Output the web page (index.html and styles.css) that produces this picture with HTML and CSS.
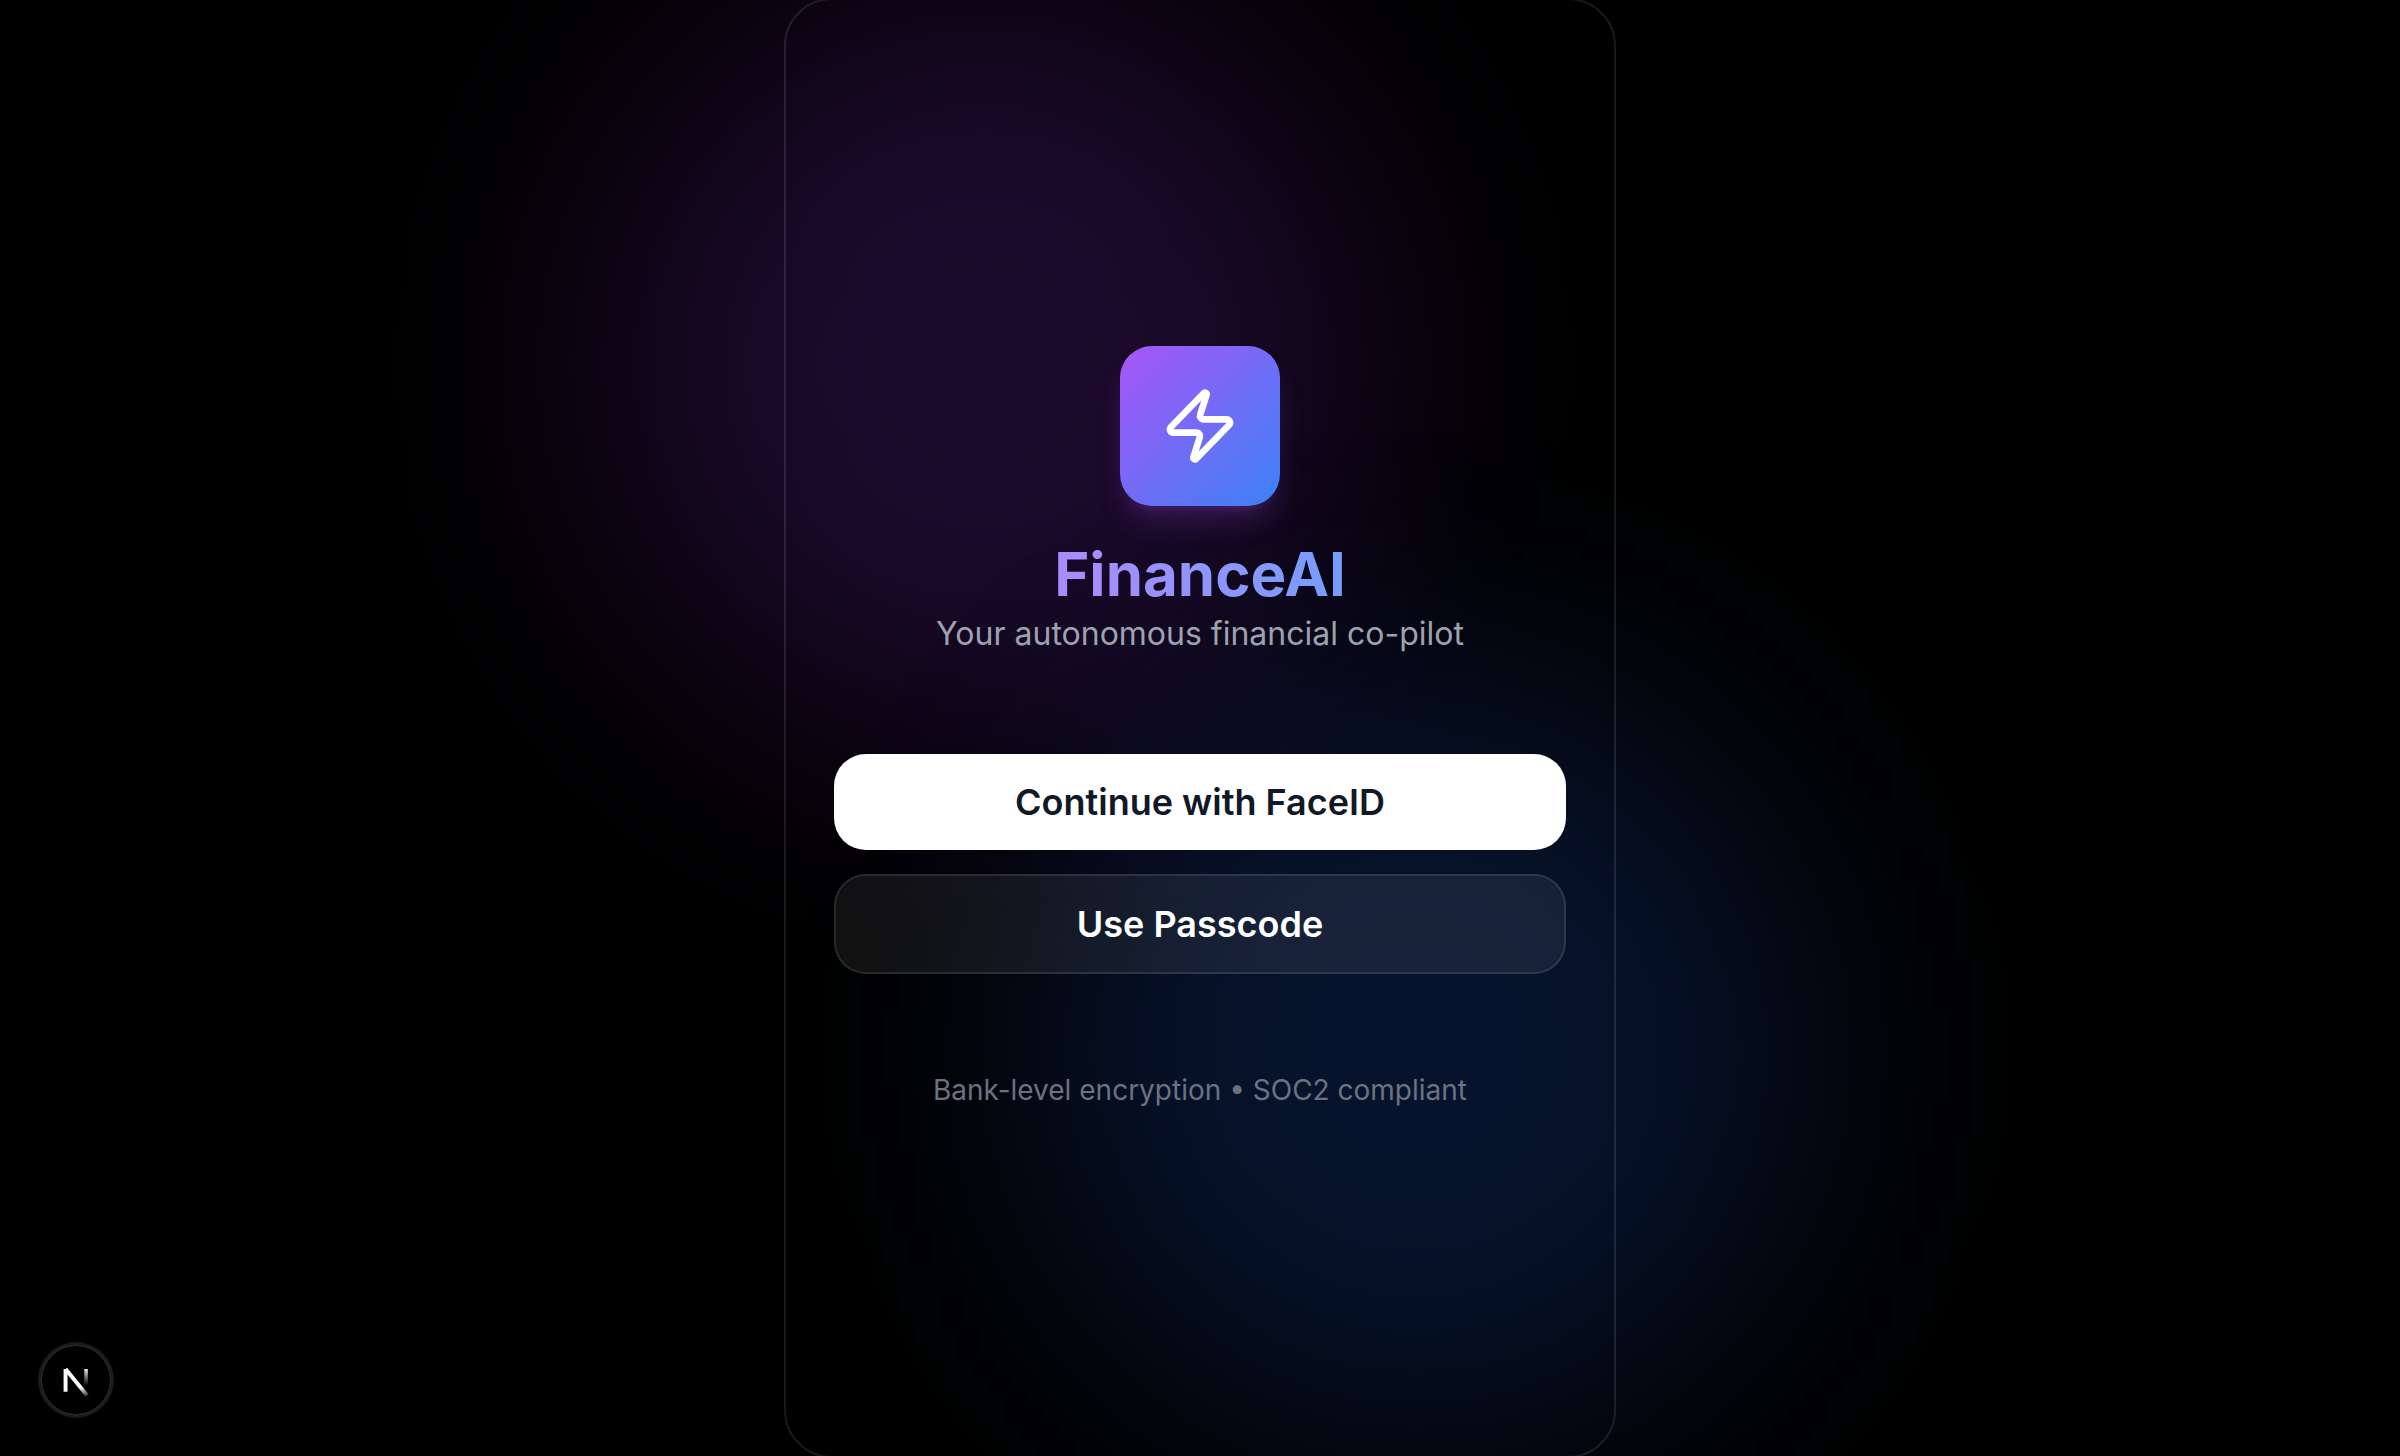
FILE: index.html
```html
<!DOCTYPE html>
<html lang="en">
<head>
<meta charset="utf-8">
<title>FinanceAI</title>
<link rel="stylesheet" href="styles.css">
</head>
<body>
<div class="glow glow-purple"></div>
<div class="glow glow-blue"></div>
<main class="panel">
  <div class="logo">
    <svg viewBox="0 0 24 24" fill="none" stroke="currentColor" stroke-width="2" stroke-linecap="round" stroke-linejoin="round"><path d="M4 14a1 1 0 0 1-.78-1.63l9.9-10.2a.5.5 0 0 1 .86.46l-1.92 6.02A1 1 0 0 0 13 10h7a1 1 0 0 1 .78 1.63l-9.9 10.2a.5.5 0 0 1-.86-.46l1.92-6.02A1 1 0 0 0 11 14z"/></svg>
  </div>
  <div class="heading">
    <h1 class="title">FinanceAI</h1>
    <p class="subtitle">Your autonomous financial co-pilot</p>
  </div>
  <div class="actions">
    <button class="btn btn-primary">Continue with FaceID</button>
    <button class="btn btn-glass">Use Passcode</button>
  </div>
  <p class="footnote">Bank-level encryption • SOC2 compliant</p>
</main>
<div class="dev-badge">
  <svg viewBox="0 0 40 40" fill="none">
    <defs>
      <linearGradient id="diag" x1="18" y1="18" x2="27" y2="30" gradientUnits="userSpaceOnUse"><stop offset=".5" stop-color="#fff"/><stop offset="1" stop-color="#fff" stop-opacity="0"/></linearGradient>
      <linearGradient id="stem" x1="25" y1="13" x2="25" y2="23" gradientUnits="userSpaceOnUse"><stop stop-color="#fff"/><stop offset="1" stop-color="#fff" stop-opacity="0"/></linearGradient>
    </defs>
    <path d="M14.2 26.5V13.9" stroke="#fff" stroke-width="2.2"/>
    <path d="M14.2 13.9L26.2 28.6" stroke="url(#diag)" stroke-width="2.2"/>
    <path d="M25.6 13.9V23" stroke="url(#stem)" stroke-width="2"/>
  </svg>
</div>
</body>
</html>
```
FILE: styles.css
```css
* { box-sizing: border-box; margin: 0; }
body {
  position: relative;
  display: flex;
  justify-content: center;
  height: 1456px;
  overflow: hidden;
  background: #000;
  color: #fff;
  font-family: Inter, "Liberation Sans", sans-serif;
}
.glow {
  position: absolute;
  width: 768px;
  height: 768px;
  border-radius: 50%;
  filter: blur(128px);
}
.glow-purple { top: -20px; left: 600px; background: rgba(147, 51, 234, .19); }
.glow-blue { bottom: 20px; right: 600px; background: rgba(37, 99, 235, .19); filter: blur(120px); }
.panel {
  position: relative;
  display: flex;
  flex-direction: column;
  align-items: center;
  width: 832px;
  height: calc(100% + 4px);
  margin: -2px 0;
  padding: 346px 48px 0;
  border: 2px solid rgba(255, 255, 255, .1);
  border-radius: 48px;
}
.logo {
  display: flex;
  align-items: center;
  justify-content: center;
  width: 160px;
  height: 160px;
  border-radius: 32px;
  background: linear-gradient(to bottom right, #a855f7, #3b82f6);
  box-shadow: 0 20px 30px -6px rgba(168, 85, 247, .22), 0 8px 12px -8px rgba(168, 85, 247, .22);
}
.logo svg { width: 80px; height: 80px; }
.heading { margin-top: 32px; text-align: center; }
.title {
  font-size: 60px;
  font-weight: 700;
  line-height: 72px;
  background: linear-gradient(to right, #c084fc, #60a5fa);
  -webkit-background-clip: text;
  background-clip: text;
  color: transparent;
}
.subtitle { font-size: 32px; line-height: 48px; color: #9ca3af; }
.actions {
  display: flex;
  flex-direction: column;
  gap: 24px;
  width: 100%;
  margin-top: 96px;
}
.btn {
  height: 96px;
  border: 0;
  border-radius: 32px;
  font: 600 36px/56px Inter, "Liberation Sans", sans-serif;
}
.btn-primary { background: #fff; color: #111827; }
.btn-glass {
  height: 100px;
  border: 2px solid rgba(255, 255, 255, .1);
  background: rgba(255, 255, 255, .065);
  color: #fff;
}
.footnote { margin-top: 96px; font-size: 28px; line-height: 40px; color: #6b7280; }
.dev-badge {
  position: absolute;
  left: 40px;
  top: 1344px;
  width: 72px;
  height: 72px;
  border-radius: 50%;
  background: #000;
  box-shadow: inset 0 0 0 2px #262626, 0 0 0 2px #1a1a1a;
}
.dev-badge svg { display: block; width: 72px; height: 72px; }
```
